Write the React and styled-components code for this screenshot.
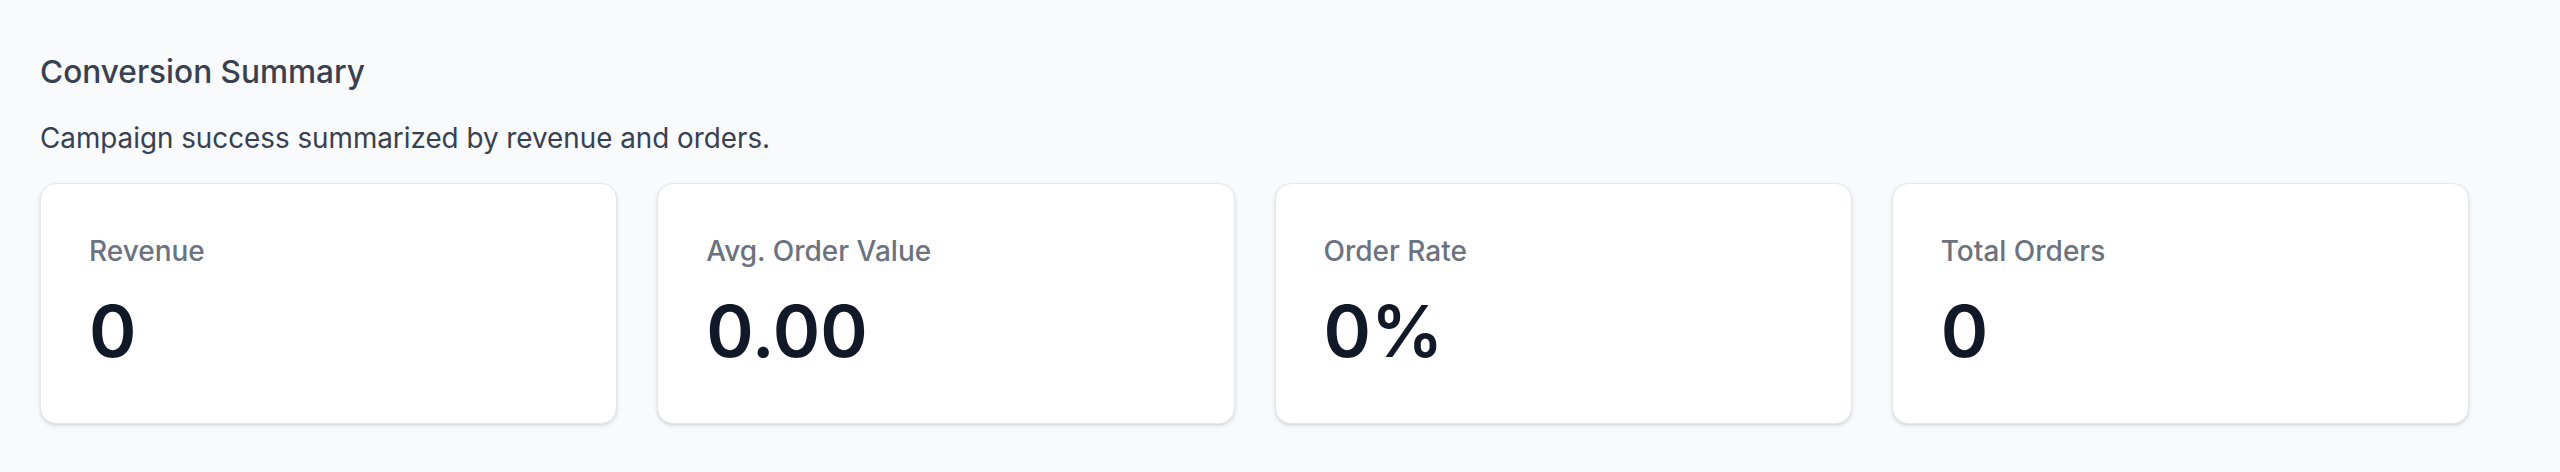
import React from 'react';
import styled, { createGlobalStyle } from 'styled-components';

const GlobalStyle = createGlobalStyle`
  html, body {
    margin: 0;
    padding: 0;
    background: #f9fafb;
    font-family: Inter, "Noto Sans", "Liberation Sans", sans-serif;
  }
`;

const Page = styled.section`
  padding: 48px 40px;
  min-height: 472px;
  box-sizing: border-box;
`;

const Title = styled.h2`
  margin: 0;
  font-size: 31.6px;
  line-height: 48px;
  font-weight: 500;
  color: #374151;
`;

const Subtitle = styled.p`
  margin: 21px 0 24px;
  font-size: 27.8px;
  line-height: 42px;
  color: #374151;
`;

const Grid = styled.div`
  display: grid;
  grid-template-columns: repeat(4, 1fr);
  gap: 40px;
  width: 2429px;
`;

const Card = styled.div`
  background: #fff;
  border: 1px solid #e5e7eb;
  border-radius: 16px;
  box-shadow: 0 2px 4px rgba(16, 24, 40, 0.1), 0 1px 2px rgba(16, 24, 40, 0.06);
  padding: 47px 48px;
  height: 241px;
  box-sizing: border-box;
`;

const Label = styled.div`
  font-size: 28px;
  line-height: 40px;
  font-weight: 500;
  color: #6b7280;
`;

const Value = styled.div`
  margin-top: 24px;
  font-size: 72px;
  line-height: 72px;
  font-weight: 600;
  color: #111827;
`;

const stats = [
  { label: 'Revenue', value: '0' },
  { label: 'Avg. Order Value', value: '0.00' },
  { label: 'Order Rate', value: '0%' },
  { label: 'Total Orders', value: '0' },
];

const App = () => (
  <>
    <GlobalStyle />
    <Page>
      <Title>Conversion Summary</Title>
      <Subtitle>Campaign success summarized by revenue and orders.</Subtitle>
      <Grid>
        {stats.map((s) => (
          <Card key={s.label}>
            <Label>{s.label}</Label>
            <Value>{s.value}</Value>
          </Card>
        ))}
      </Grid>
    </Page>
  </>
);

export default App;
